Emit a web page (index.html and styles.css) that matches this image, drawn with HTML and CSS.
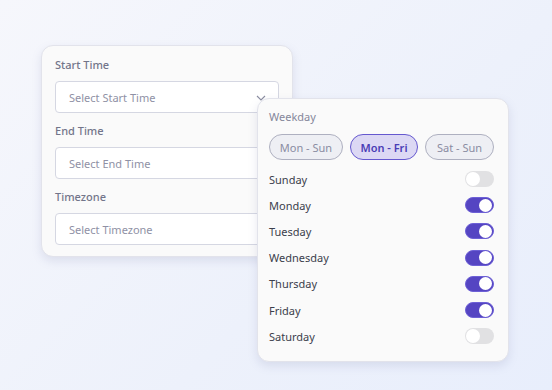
FILE: index.html
```html
<!DOCTYPE html>
<html lang="en">
<head>
  <meta charset="UTF-8" />
  <title>Schedule</title>
  <link rel="stylesheet" href="styles.css">
</head>
<body>
  <div class="stage">
    <!-- Time card -->
    <div class="card card-time">
      <label class="field-label">Start Time</label>
      <div class="select">
        <span>Select Start Time</span>
        <svg class="chev" width="10" height="6" viewBox="0 0 10 6"><path d="M1 1l4 4 4-4" fill="none" stroke="#8a8ca0" stroke-width="1.1"/></svg>
      </div>
      <label class="field-label">End Time</label>
      <div class="select"><span>Select End Time</span></div>
      <label class="field-label">Timezone</label>
      <div class="select"><span>Select Timezone</span></div>
    </div>

    <!-- Weekday card -->
    <div class="card card-week">
      <div class="week-title">Weekday</div>
      <div class="pills">
        <span class="pill">Mon - Sun</span>
        <span class="pill active">Mon - Fri</span>
        <span class="pill">Sat - Sun</span>
      </div>
      <ul class="days">
        <li><span>Sunday</span><i class="toggle"></i></li>
        <li><span>Monday</span><i class="toggle on"></i></li>
        <li><span>Tuesday</span><i class="toggle on"></i></li>
        <li><span>Wednesday</span><i class="toggle on"></i></li>
        <li><span>Thursday</span><i class="toggle on"></i></li>
        <li><span>Friday</span><i class="toggle on"></i></li>
        <li><span>Saturday</span><i class="toggle"></i></li>
      </ul>
    </div>
  </div>
</body>
</html>
```

FILE: styles.css
```css
body {
  margin: 0;
  font-family: 'Noto Sans', sans-serif;
  background: linear-gradient(135deg, #f6f7fc 0%, #edf1fb 60%, #e8eefc 100%);
  width: 552px;
  height: 390px;
  overflow: hidden;
}
.stage {
  position: relative;
  width: 552px;
  height: 390px;
}
.card {
  position: absolute;
  background: #fafafa;
  border: 1px solid #e2e3eb;
  border-radius: 12px;
  box-shadow: 0 4px 10px rgb(120 130 170 / 0.18);
  box-sizing: border-box;
}
.card-time {
  left: 41px;
  top: 45px;
  width: 252px;
  height: 212px;
  padding: 11px 13px 0 13px;
}
.field-label {
  display: block;
  font-size: 11px;
  font-weight: 500;
  color: #72758a;
  line-height: 16px;
  margin-bottom: 8px;
}
.select {
  display: flex;
  align-items: center;
  justify-content: space-between;
  height: 32px;
  box-sizing: border-box;
  border: 1px solid #d5d7e2;
  border-radius: 4px;
  background: #fff;
  padding: 0 12px 0 13px;
  font-size: 11px;
  color: #8f91a5;
  margin-bottom: 10px;
}
.chev {
  margin-top: 1px;
}
.card-week {
  left: 257px;
  top: 98px;
  width: 252px;
  height: 264px;
  padding: 10px 14px 0 11px;
}
.week-title {
  font-size: 11px;
  color: #85879b;
  line-height: 16px;
  margin-bottom: 9px;
}
.pills {
  display: flex;
  gap: 7px;
  margin-bottom: 6px;
}
.pill {
  display: flex;
  align-items: center;
  justify-content: center;
  height: 26px;
  box-sizing: border-box;
  border: 1px solid #aeb0c0;
  border-radius: 13px;
  background: #eeeff4;
  color: #8a8ca2;
  font-size: 11px;
  width: 75px;
}
.pill.active {
  width: 69px;
  background: #dcd8f4;
  border-color: #6558cf;
  color: #4a3db6;
  font-weight: 600;
}
.pill:last-child {
  width: 70px;
}
.days {
  list-style: none;
  margin: 0;
  padding: 0;
}
.days li {
  display: flex;
  align-items: center;
  justify-content: space-between;
  height: 26.2px;
  font-size: 11px;
  color: #3b3e4c;
}
.toggle {
  position: relative;
  width: 29px;
  height: 16px;
  border-radius: 8px;
  background: #e1e1e3;
  box-sizing: border-box;
}
.toggle::after {
  content: '';
  position: absolute;
  left: 1px;
  top: 1px;
  width: 14px;
  height: 14px;
  border-radius: 50%;
  background: #fff;
}
.toggle.on {
  background: #5545c2;
  border: 1px solid #6d60d6;
}
.toggle.on::after {
  left: auto;
  right: 1px;
  top: 0.5px;
  width: 13px;
  height: 13px;
}
```
